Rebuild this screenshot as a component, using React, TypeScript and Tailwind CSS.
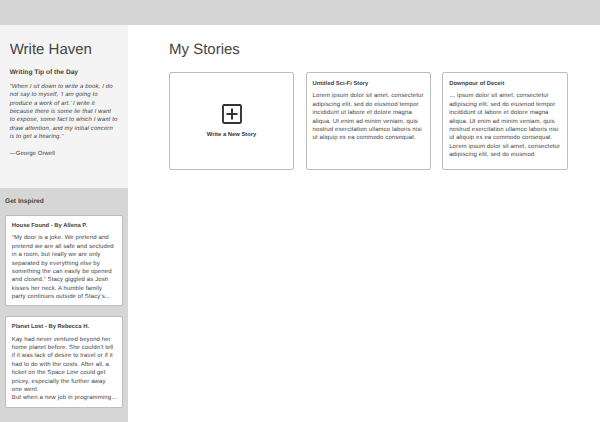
const quote = [
  "“When I sit down to write a book, I do",
  "not say to myself, ‘I am going to",
  "produce a work of art.’ I write it",
  "because there is some lie that I want",
  "to expose, some fact to which I want to",
  "draw attention, and my initial concern",
  "is to get a hearing.”",
];

const inspired = [
  {
    title: "House Found - By Allena P.",
    lines: [
      "“My door is a joke. We pretend and",
      "pretend we are all safe and secluded",
      "in a room, but really we are only",
      "separated by everything else by",
      "something the can easily be opened",
      "and closed,” Stacy giggled as Josh",
      "kisses her neck. A humble family",
      "party continues outside of Stacy’s…",
    ],
  },
  {
    title: "Planet Lost - By Rebecca H.",
    lines: [
      "Kay had never ventured beyond her",
      "home planet before. She couldn’t tell",
      "if it was lack of desire to travel or if it",
      "had to do with the costs. After all, a",
      "ticket on the Space Line could get",
      "pricey, especially the further away",
      "one went.",
      "But when a new job in programming…",
    ],
  },
];

const stories = [
  {
    title: "Untitled Sci-Fi Story",
    lines: [
      "Lorem ipsum dolor sit amet, consectetur",
      "adipiscing elit, sed do eiusmod tempor",
      "incididunt ut labore et dolore magna",
      "aliqua. Ut enim ad minim veniam, quis",
      "nostrud exercitation ullamco laboris nisi",
      "ut aliquip ex ea commodo consequat.",
    ],
  },
  {
    title: "Downpour of Deceit",
    lines: [
      "… ipsum dolor sit amet, consectetur",
      "adipiscing elit, sed do eiusmod tempor",
      "incididunt ut labore et dolore magna",
      "aliqua. Ut enim ad minim veniam, quis",
      "nostrud exercitation ullamco laboris nisi",
      "ut aliquip ex ea commodo consequat.",
      "Lorem ipsum dolor sit amet, consectetur",
      "adipiscing elit, sed do eiusmod.",
    ],
  },
];

function Lines({ lines, className }: { lines: string[]; className: string }) {
  return (
    <div className={className}>
      {lines.map((line, i) => (
        <p key={i} className="whitespace-nowrap">
          {line}
        </p>
      ))}
    </div>
  );
}

function StoryCard({ title, lines, className }: { title: string; lines: string[]; className: string }) {
  return (
    <article className={`rounded-[2px] border border-[#bdbdbd] bg-white ${className}`}>
      <h3 className="whitespace-nowrap text-[5.85px] leading-[8px] font-bold">{title}</h3>
      <Lines lines={lines} className="mt-[4.4px] text-[6px] leading-[8.37px] tracking-[0.11px]" />
    </article>
  );
}

export default function App() {
  return (
    <div className="flex h-[422px] w-[600px] flex-col overflow-hidden bg-white font-['Liberation_Sans',Arial,sans-serif] text-[#444444] [text-rendering:geometricPrecision]">
      <header className="h-[25px] shrink-0 bg-[#d4d4d4]" />
      <div className="flex min-h-0 flex-1">
        <aside className="flex w-[127.5px] shrink-0 flex-col bg-[#f4f4f4]">
          <section className="h-[163px] shrink-0 pt-[16px] pl-[9.7px]">
            <h1 className="text-[15px] leading-[18px] whitespace-nowrap">Write Haven</h1>
            <h2 className="mt-[10px] text-[6.65px] leading-[8px] font-bold whitespace-nowrap">Writing Tip of the Day</h2>
            <Lines lines={quote} className="mt-[6.2px] text-[6px] leading-[8.3px] tracking-[0.11px] italic" />
            <p className="mt-[8.5px] text-[6px] leading-[8.3px] tracking-[0.04px]">—George Orwell</p>
          </section>
          <section className="flex-1 bg-[#d6d6d6] px-[5px] pt-[10px]">
            <h2 className="text-[6.65px] leading-[8px] font-bold whitespace-nowrap">Get Inspired</h2>
            <div className="mt-[9px] flex flex-col gap-[10px]">
              {inspired.map((s) => (
                <StoryCard key={s.title} {...s} className="h-[91.3px] w-[117.5px] pt-[6px] pl-[5.8px]" />
              ))}
            </div>
          </section>
        </aside>
        <main className="flex-1 pt-[16px] pl-[41.5px]">
          <h1 className="text-[15px] leading-[18px] whitespace-nowrap">My Stories</h1>
          <div className="mt-[13px] flex gap-[11.5px]">
            <button className="flex h-[98px] w-[125.2px] flex-col items-center rounded-[2px] border border-[#bdbdbd] bg-white pt-[31px]">
              <svg viewBox="0 0 20 20" className="size-[20px]" fill="none" stroke="#333333">
                <rect x="1" y="1" width="18" height="18" rx="1.2" strokeWidth="1.9" />
                <path d="M10 4.5v11M4.5 10h11" strokeWidth="2" />
              </svg>
              <span className="mt-[6px] text-[5.85px] leading-[8px] font-bold whitespace-nowrap text-[#333333]">Write a New Story</span>
            </button>
            {stories.map((s) => (
              <StoryCard key={s.title} {...s} className="h-[98px] w-[125.2px] pt-[7px] pl-[5.8px]" />
            ))}
          </div>
        </main>
      </div>
    </div>
  );
}
